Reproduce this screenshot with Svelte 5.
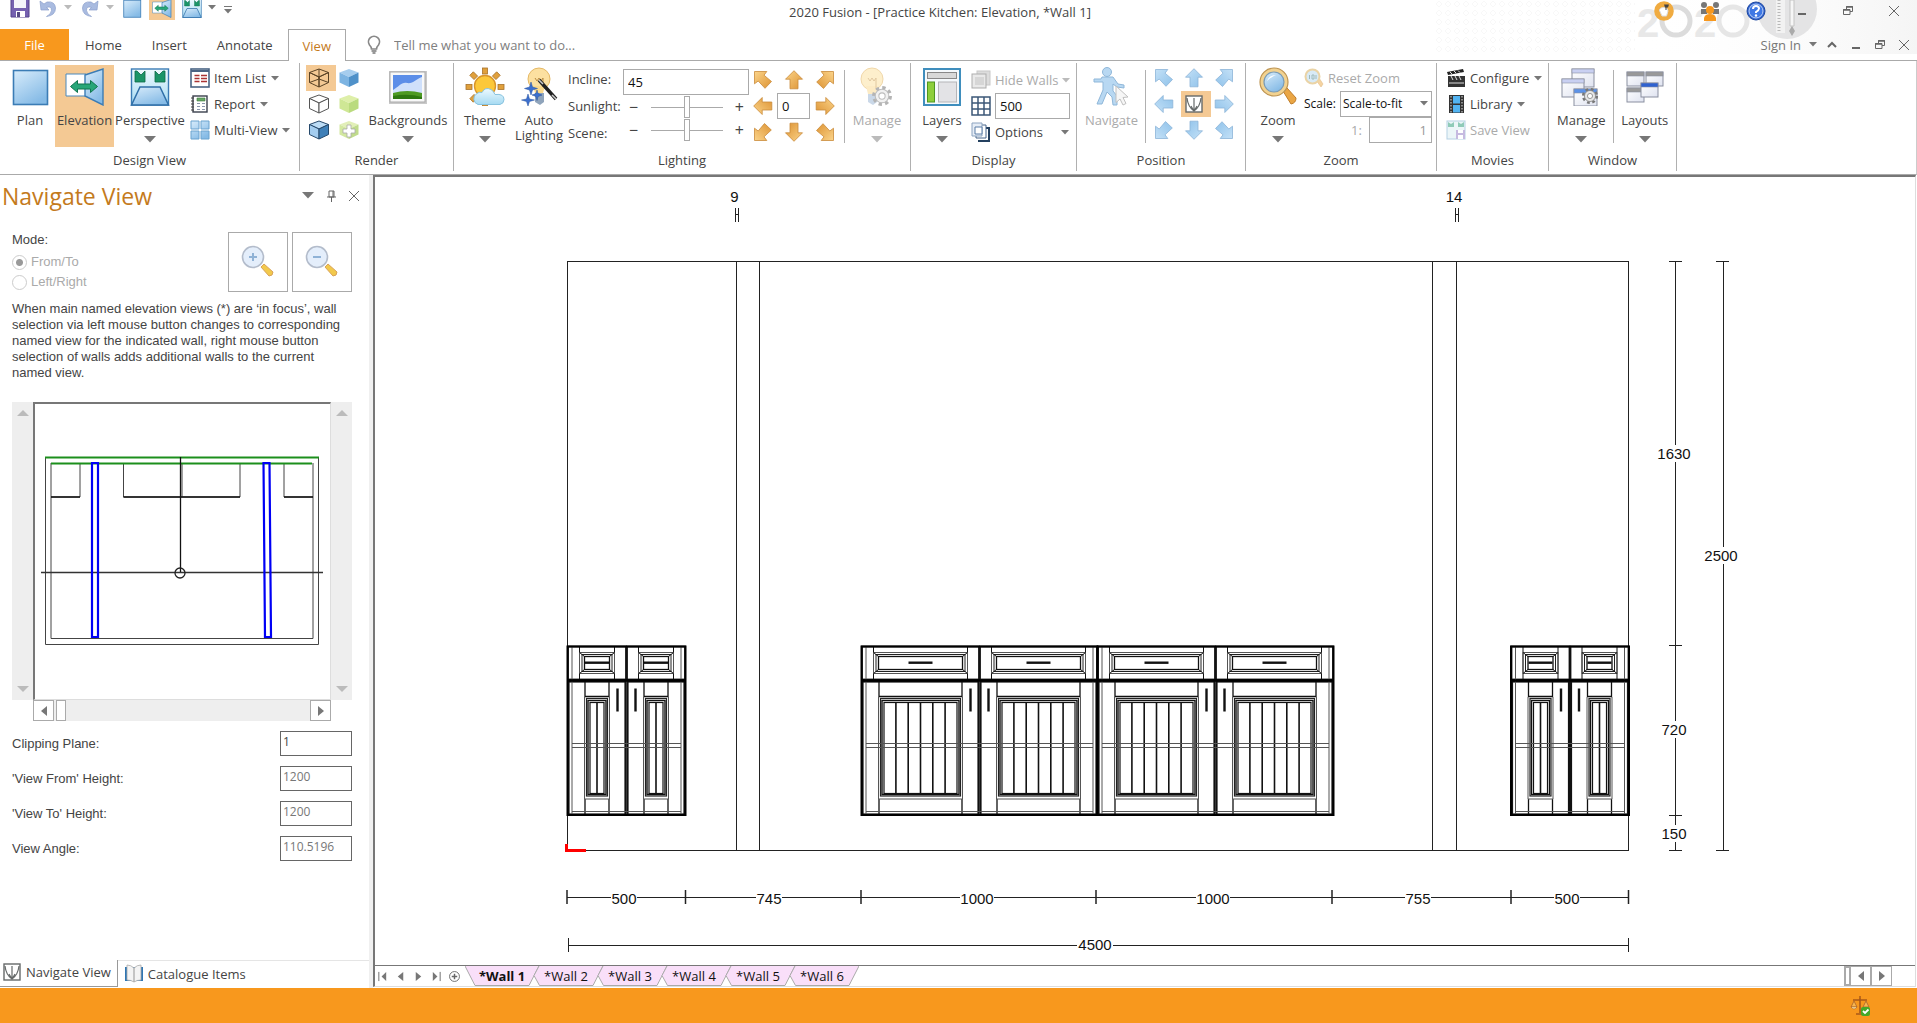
<script lang="ts">
  type Dim = { at: number; label: string };

  const ribbonTabs = ['Home', 'Insert', 'Annotate', 'View'];
  let activeTab = $state('View');

  const walls = ['*Wall 1', '*Wall 2', '*Wall 3', '*Wall 4', '*Wall 5', '*Wall 6'];
  let activeWall = $state('*Wall 1');

  let incline = $state('45');
  let sunlight = $state(50);
  let scene = $state(50);
  let rotation = $state('0');
  let gridSize = $state('500');
  let tellMe = $state('');

  // Direction pads, row by row. The centre cell is filled separately.
  const directions = [
    { name: 'Up left', diagonal: true, turn: 0 },
    { name: 'Up', diagonal: false, turn: 0 },
    { name: 'Up right', diagonal: true, turn: 90 },
    { name: 'Left', diagonal: false, turn: 270 },
    null,
    { name: 'Right', diagonal: false, turn: 90 },
    { name: 'Down left', diagonal: true, turn: 270 },
    { name: 'Down', diagonal: false, turn: 180 },
    { name: 'Down right', diagonal: true, turn: 180 }
  ];

  const fields = [
    { id: 'clip', label: 'Clipping Plane:', value: '1', disabled: false },
    { id: 'from', label: "'View From' Height:", value: '1200', disabled: true },
    { id: 'to', label: "'View To' Height:", value: '1200', disabled: true },
    { id: 'angle', label: 'View Angle:', value: '110.5196', disabled: true }
  ];

  // Base units on the wall: x of the unit, width of one door
  const units = [
    { x: 567.5, door: 59 },
    { x: 861.5, door: 118 },
    { x: 1097.5, door: 118 },
    { x: 1511, door: 59 }
  ];

  const bottomTicks = [567, 685.5, 861, 1096, 1332, 1511, 1628.5];
  const bottomDims: Dim[] = [
    { at: 624, label: '500' },
    { at: 769, label: '745' },
    { at: 977, label: '1000' },
    { at: 1213, label: '1000' },
    { at: 1418, label: '755' },
    { at: 1567, label: '500' }
  ];
  const sideTicks = [261, 645, 815, 850];
  const sideDims: Dim[] = [
    { at: 454, label: '1630' },
    { at: 730, label: '720' },
    { at: 834, label: '150' }
  ];

  function slats(width: number) {
    const count = width > 100 ? 5 : 1;
    return Array.from({ length: count }, (_, i) => width / 2 + (i - (count - 1) / 2) * 12.3);
  }
</script>

{#snippet caret()}
  <svg class="caret" viewBox="0 0 8 5" aria-hidden="true"><path d="M0 0h8L4 4.5z" /></svg>
{/snippet}

{#snippet bigCaret()}
  <svg class="big-caret" viewBox="0 0 12 7" aria-hidden="true"><path d="M0 0h12L6 6.5z" /></svg>
{/snippet}

{#snippet arrow(diagonal: boolean, turn: number, tone: string)}
  <svg class="arrow" viewBox="0 0 20 20" aria-hidden="true">
    <g transform="rotate({turn} 10 10)" fill="url(#{tone})" stroke={tone === 'gold' ? '#c98a3a' : '#8bb4d8'} stroke-width=".8">
      {#if diagonal}
        <path d="M1.5 1.5h12.3L11 5.2l7.5 6.3-6.500 6.800-6.800-7.300-3.700 2.800z" />
      {:else}
        <path d="M10 .7 18.5 9.2H14v9.600H6V9.200H1.500z" />
      {/if}
    </g>
  </svg>
{/snippet}

{#snippet gear(x: number, y: number, size: number)}
  <g transform="translate({x} {y}) scale({size})">
    <circle r="7.5" fill="none" stroke="#777" stroke-width="4" stroke-dasharray="3 2.89" />
    <circle r="6.5" fill="#e6e6e6" stroke="#888" />
    <circle r="3" fill="#fff" stroke="#888" />
  </g>
{/snippet}

{#snippet pane(x: number, y: number, w: number, h: number, head: string)}
  <rect {x} {y} width={w} height={h} fill="url(#paper)" stroke="#8a8fa0" />
  <rect {x} {y} width={w} height="4" fill={head} stroke="#8a8fa0" stroke-width=".6" />
{/snippet}

{#snippet pic(name: string)}
  <svg class="pic" viewBox="0 0 40 40" aria-hidden="true">
    {#if name === 'plan'}
      <rect x="3.5" y="4.5" width="34" height="34" fill="url(#sky)" stroke="#3b7cb5" stroke-width="1.6" />
    {:else if name === 'elevation'}
      <path d="M1 8h20v22H1z" fill="#fff" stroke="#4b89bd" />
      <path d="M20 9 38 3v36l-18-9z" fill="url(#sky)" stroke="#3b7cb5" stroke-width="1.4" />
      <path d="m5.500 20.500 7-6v3.500h13v-3.500l7 6-7 6V23h-13v3.500z" fill="#27a678" stroke="#10754f" />
    {:else if name === 'perspective'}
      <rect x="1.5" y="3" width="37" height="36" fill="url(#pale)" stroke="#3b7cb5" stroke-width="1.4" />
      <path d="M10 21h20l8.500 18h-37z" fill="url(#sky)" stroke="#2f6fa8" stroke-width="1.5" />
      <path d="M5 5v11h10V5l-4 4-4-4zM35 5v11H25V5l4 4 4-4z" fill="#1b9568" stroke="#0d6b48" stroke-width=".8" />
    {:else if name === 'backgrounds'}
      <rect x="1" y="5" width="38" height="33" fill="#c9c9c9" />
      <rect x="2" y="6" width="35" height="30" fill="#f8f8f8" stroke="#aaa" />
      <rect x="5" y="9" width="29" height="24" fill="#5c8ee8" />
      <path d="M5 24c6-3 8-8 14-7s9-4 15-6v18H5z" fill="#cfe0fb" />
      <path d="M5 27q14-4 29 0v6H5z" fill="#4d9a22" />
      <path d="M5 30q15-3 29 1v2H5z" fill="#2d7710" />
    {:else if name === 'theme'}
      <g fill="#e0a03c" stroke="#a8722a" stroke-width=".8">
        {#each [0, 45, 90, 135, 180, 225, 270, 315] as a}
          <rect x="17.5" y="2" width="5" height="6" transform="rotate({a} 20 21)" />
        {/each}
      </g>
      <circle cx="20" cy="20" r="10.5" fill="#fcc83a" stroke="#d9952a" stroke-width="1.4" />
      <path d="M13 38.500a6 6 0 0 1-1-11q2-2 5-1 3-6 9-3 3 2 4 5 9-1 9 5 0 4-4 5z" fill="url(#pale)" stroke="#88c3df" />
    {:else if name === 'auto'}
      <circle cx="20" cy="13" r="11" fill="#fce0a0" stroke="#e5b865" />
      <path d="M14 20h12l-2 7h-8z" fill="#fad98c" />
      <path d="m16 12 2 3 2-3 2 3 2-3v9" fill="none" stroke="#b88b42" />
      <path d="M16 27h9v9l-4 3-5-3z" fill="#8fa4bb" />
      <path d="m20 14 17 19" stroke="#222" stroke-width="3.5" />
      <path d="m20 14 4 4M33 29l4 4" stroke="#ccc" stroke-width="1.5" />
      <g fill="#3c70cf" stroke="#25509d" stroke-width=".5">
        <path d="m12 16 1.500 5 5 1.500-5 1.500-1.500 5-1.500-5-5-1.500 5-1.500zM18 24l1 3.500 4 1.500-4 1.500-1 4-1-4-4-1.500 4-1.500zM9 28l1.500 5 5 1-5 1.500L9 40l-1.500-4.500-5-1.500 5-1z" />
      </g>
    {:else if name === 'manage-light'}
      <g opacity=".55">
        <circle cx="15" cy="13" r="11" fill="#fde3a4" stroke="#e5b865" />
        <path d="M9 20h12l-2 8h-8z" fill="#fbdc96" />
        <path d="m11 12 2 3 2-3 2 3 2-3v10" fill="none" stroke="#c89d55" />
        <path d="M11 28h9v8l-4 3-5-3z" fill="#9fb9d6" />
        {@render gear(25, 30, 1.05)}
      </g>
    {:else if name === 'layers'}
      <rect x="2" y="3" width="36" height="36" fill="#f5f9fc" stroke="#3f8ebd" stroke-width="2" />
      <rect x="5.5" y="6.5" width="29" height="6" fill="#d8d8d8" stroke="#888" />
      <rect x="5.5" y="16" width="7" height="20" fill="#8dcf3c" stroke="#4f9620" />
      <rect x="16.5" y="16" width="18" height="20" fill="#e3e3e6" stroke="#b5b5b8" />
    {:else if name === 'navigate'}
      <g fill="#b8d8f2" stroke="#8fb7d9">
        <path d="M10 11h11l5 7 6 1v3l-7-1-4-3v7l4 5v9h-4l-1-8-5-5-5 12H5l6-14v-8H2v-3h7z" />
        <circle cx="15" cy="6" r="4.5" />
      </g>
      <path d="m24 20 12 11-5 .5 3 6-3 1.500-3-6-4 3.500z" fill="#f6f6f6" stroke="#c0c0c0" />
    {:else if name === 'zoom'}
      <path d="m25 25 4-3 9 10q0 5-5 6z" fill="#eaa645" stroke="#c07d29" />
      <circle cx="16" cy="16" r="14" fill="#f2d290" stroke="#bd9452" stroke-width="1.2" />
      <circle cx="16" cy="16" r="10" fill="url(#sky)" stroke="#7a9bb5" stroke-width="1.2" />
      <path d="M9 15q2-6 9-6-5 2-9 6" fill="#fff" />
    {:else if name === 'manage-win'}
      {@render pane(11, 3, 22, 18, '#c9d0f2')}
      {@render pane(1, 13, 22, 18, '#c9d0f2')}
      {@render pane(13, 23, 23, 17, '#5c92e8')}
      {@render gear(29, 30, 0.85)}
    {:else if name === 'layouts'}
      {@render pane(2, 6, 17, 14, '#999')}
      {@render pane(21, 6, 17, 14, '#999')}
      {@render pane(2, 22, 17, 14, '#999')}
      {@render pane(16, 17, 17, 14, '#2f62d0')}
    {/if}
  </svg>
{/snippet}

{#snippet glyph(name: string)}
  <svg class="glyph" viewBox="0 0 20 20" aria-hidden="true">
    {#if name === 'list'}
      <rect x="1" y="1" width="18" height="18" fill="#fff" stroke="#4a6484" stroke-width="1.6" />
      <path d="M1 2h18v2H1z" fill="#4a6484" />
      <path d="M4.500 7.500h5M4.500 10.500h5M4.500 13.500h5M11 7.500h6M11 10.500h6M11 13.500h6" stroke="#a33" stroke-width="1.3" />
    {:else if name === 'report'}
      <rect x="3" y="2" width="14" height="16" fill="#fff" stroke="#3a3f4c" stroke-width="1.4" />
      <path d="M1 4h3M1 7h3M1 10h3M1 13h3M1 16h3" stroke="#444" />
      <path d="M7 4h8v3H7z" fill="#67a865" stroke="#3d7a3e" stroke-width=".6" />
      <path d="M7 9.500h3M7 12.500h3M7 15.500h3M12 9.500h3M12 12.500h3M12 15.500h3" stroke="#8a96ad" />
    {:else if name === 'multi'}
      <path d="M1 1h8v8H1zM11 1h8v8h-8zM1 11h8v8H1zM11 11h8v8h-8z" fill="url(#sky)" stroke="#6ba3cf" />
    {:else if name.startsWith('cube')}
      {@const tone = {
        'cube-wire': ['none', 'none', 'none', '#5a4326'],
        'cube-hidden': ['#fff', '#fff', '#fff', '#555'],
        'cube-edge': ['#bcdcf5', '#a4cdef', '#3f80b8', '#26496b'],
        'cube-blue': ['#a6cdee', '#7db4e2', '#4f91c9', 'none'],
        'cube-green': ['#deefa9', '#cfe795', '#badb7e', 'none'],
        'cube-add': ['#e2efb8', '#d3e8a0', '#c0db8c', 'none']
      }[name] ?? []}
      <g stroke={tone[3]} stroke-linejoin="round">
        <path d="M10 1 19.500 4.500 10 9 .5 4.500z" fill={tone[0]} />
        <path d="M.5 4.500 10 9v10L.5 14.500z" fill={tone[1]} />
        <path d="M10 9l9.500-4.500v10L10 19z" fill={tone[2]} />
        {#if name === 'cube-wire'}<path d="M10 1v10M.5 14.500 10 11l9.500 3.500" fill="none" />{/if}
      </g>
      {#if name === 'cube-add'}
        <path d="M8 5h4v4h4v4h-4v4H8v-4H4V9h4z" fill="#fff" stroke="#aaa" stroke-width=".8" />
      {/if}
    {:else if name === 'walls'}
      <rect x="6" y="1" width="13" height="14" fill="#d4d4d4" stroke="#bbb" />
      <rect x="1" y="4" width="14" height="14" fill="#e4e4e4" stroke="#999" />
      <path d="M4 7h9v8H4z" fill="#ccc" />
    {:else if name === 'grid'}
      <path d="M1 1h18v18H1zM7 1v18M13 1v18M1 7h18M1 13h18" fill="#fff" stroke="#3d5878" stroke-width="1.5" />
    {:else if name === 'options'}
      <path d="M9 6h9v13H7" fill="#fff" stroke="#24405f" stroke-width="2" />
      <path d="M5 3h10v13H5z" fill="#fff" stroke="#47648a" />
      <path d="M1 1h10v13H1z" fill="#e6edf6" stroke="#8ca3bf" />
      <path d="M4 5h7v7H4z" fill="#fff" stroke="#5b7da6" />
    {:else if name === 'reset'}
      <path d="m12 12 3-2 4 6-2 3z" fill="#f3c98a" stroke="#dcae6b" stroke-width=".6" />
      <circle cx="8.5" cy="8.5" r="7" fill="#cfe5f5" stroke="#e5c98f" stroke-width="2" />
      <path d="M5.500 7v4M8 7v4h2V7H8M12 7v4" fill="none" stroke="#8aa" />
    {:else if name === 'clapper'}
      <path d="M2 8h17v11H2z" fill="#333" />
      <path d="m1 4 16-3 1 3L2 7z" fill="#222" />
      <path d="m4 4 2 2M8 3l2 2M12 2.500l2 2M5 8l2 4M9 8l2 4M13 8l2 4M3 15h15" stroke="#ddd" />
    {:else if name === 'film'}
      <path d="M3 1h15v18H3z" fill="#333" />
      <path d="M7 2h7v7.500H7zM7 11h7v7.500H7z" fill="#52b4f2" />
      <path d="M5 2v17M16 2v17" stroke="#aaa" stroke-width="1.5" stroke-dasharray="1.5 1.5" />
    {:else if name === 'save-view'}
      <g opacity=".7">
        <rect x="1" y="1" width="18" height="18" fill="#dff0f5" stroke="#7eb1cf" />
        <path d="M2 2v5h6V2L5 4zM18 2v5h-6V2l3 2z" fill="#3aa583" />
        <path d="M10 10h9v9h-9z" fill="#9b85c9" />
        <path d="M12 10h5v3h-5zM12 15h5v4h-5z" fill="#fff" />
      </g>
    {:else if name === 'position'}
      <rect x="2" y="2" width="16" height="16" fill="#fff" stroke="#666a6a" stroke-width="1.4" />
      <path d="M10 4v13M3 4q1 9 7 13 6-4 7-13M7 12l3 5 3-5" fill="none" stroke="#666a6a" stroke-width="1.2" />
    {:else if name === 'book'}
      <path d="M1 3v14h18V3" fill="#2f76b3" />
      <path d="M3 1q4 0 7 3v14q-3-2-7-2zM17 1q-4 0-7 3v14q3-2 7-2z" fill="#f4f4f4" stroke="#aaa" stroke-width=".8" />
    {:else if name === 'save'}
      <path d="M1 1h18v18H1z" fill="#7561b0" stroke="#57458e" />
      <path d="M4 1h12v9H4z" fill="#f4f4fa" />
      <path d="M6 13h9v6H6z" fill="#fff" />
      <path d="M7 14h3v5H7z" fill="#574b85" />
    {:else if name === 'undo' || name === 'redo'}
      <g transform={name === 'redo' ? 'translate(20 0) scale(-1 1)' : ''}>
        <path d="m2 3 1 9h8L8.500 9.500q5-2 5 3-.5 4-5 6 9-1 9-8.500Q17 3 9 4L6 6z" fill="#a9bbe0" stroke="#8b9fcc" stroke-width=".7" />
      </g>
    {:else if name === 'bulb'}
      <path d="M7.500 14q0-2-2-4a5.500 5.500 0 1 1 9 0q-2 2-2 4z" fill="#fff" stroke="#888" stroke-width="1.7" />
      <path d="M7.500 16h5M8.500 18h3" stroke="#777" stroke-width="1.6" />
    {:else if name === 'help'}
      <circle cx="10" cy="10" r="9" fill="#2f62ce" stroke="#1d479f" />
      <circle cx="10" cy="10" r="7" fill="#3f78e4" stroke="#bcd0f5" />
      <path d="M7 8q0-3 3-3t3 2.500Q13 9 10 11v1" fill="none" stroke="#fff" stroke-width="2" />
      <circle cx="10" cy="14.5" r="1.2" fill="#fff" />
    {:else if name === 'people'}
      <g fill="#777">
        <circle cx="4" cy="4" r="3" /><path d="M1 8h6v5H1z" />
        <circle cx="16" cy="4" r="3" /><path d="M13 8h6v5h-6z" />
      </g>
      <circle cx="10" cy="9" r="4" fill="#f8981d" />
      <path d="M4 20q-1-7 6-7t6 7z" fill="#f8981d" />
    {:else if name === 'idea'}
      <circle cx="10" cy="10" r="9.8" fill="#f0ab40" />
      <path d="M5.500 9.500q0-3 4.500-3 4 0 4 3.500l-1.500 5H8z" fill="#fff" stroke="#ddd" />
      <path d="M10 3.500h5l-1 3h-3z" fill="#444" />
      <path d="M12 6v3" stroke="#444" />
    {:else if name === 'scales'}
      <path d="M10 2v15M3 4h14M6 18h9M9 1h2" stroke="#a85818" stroke-width="1.6" />
      <path d="M4 5 1 11h6zM16 5l-3 6h6z" fill="#f8b650" stroke="#a8622a" stroke-width=".8" />
      <path d="M1 11h6q-3 4-6 0" fill="#fff0b5" stroke="#a8622a" stroke-width=".6" />
      <rect x="11" y="11" width="9" height="9" rx="2" fill="#45a827" />
      <path d="m13 15 2 2 3.500-3.500" fill="none" stroke="#fff" stroke-width="1.8" />
    {/if}
  </svg>
{/snippet}

{#snippet sign(name: string)}
  <svg class="sign" viewBox="0 0 12 12" aria-hidden="true">
    {#if name === 'min'}<path d="M2 9h8" stroke-width="2" />
    {:else if name === 'restore'}<path d="M4.500 4V1.500h6v5H8M1.500 4.500H8v5H1.500z" /><path d="M4 2h7M1 5h7" stroke-width="1.5" />
    {:else if name === 'close'}<path d="m1 1 10 10M11 1 1 11" />
    {:else if name === 'up'}<path d="m2 8 4-4 4 4" stroke-width="2" />
    {:else if name === 'pin'}<path d="M4 1h5v6H4zM2 7h9M6.500 7v5M8 1v6" />
    {:else if name === 'left'}<path class="solid" d="M9 1v10L3 6z" />
    {:else if name === 'right'}<path class="solid" d="M3 1v10l6-5z" />
    {:else if name === 'first'}<path class="solid" d="M10 1v10L5 6z" /><path d="M2 1v10" />
    {:else if name === 'last'}<path class="solid" d="M2 1v10l5-5z" /><path d="M10 1v10" />
    {:else if name === 'scroll-up'}<path class="solid" d="M0 9h12L6 3z" />
    {:else if name === 'scroll-down'}<path class="solid" d="M0 3h12L6 9z" />
    {:else if name === 'add'}<circle cx="6" cy="6" r="5.4" /><path d="M6 3v6M3 6h6" stroke-width="1.6" />
    {/if}
  </svg>
{/snippet}

{#snippet big(name: string, label: string, menu = false, disabled = false, on = false)}
  <button class="big" class:on {disabled}>
    {@render pic(name)}
    <span>{label}</span>
    {#if menu}{@render bigCaret()}{/if}
  </button>
{/snippet}

{#snippet small(name: string, label: string, menu = true, disabled = false)}
  <button class="small" {disabled}>
    {@render glyph(name)}
    <span>{label}</span>
    {#if menu}{@render caret()}{/if}
  </button>
{/snippet}

{#snippet lens(plus: boolean)}
  <svg class="lens" viewBox="0 0 34 34" aria-hidden="true">
    <path d="m20 22 3-3 9 8q0 4-4 4z" fill="#f2c94c" stroke="#d9a35a" />
    <circle cx="12" cy="12" r="10.5" fill="#e4eefb" stroke="#b3bccb" stroke-width="1.6" />
    <path d={plus ? 'M8 12h8M12 8v8' : 'M8 12h8'} stroke="#8fb2d6" stroke-width="2" />
  </svg>
{/snippet}

<!-- Shared gradients -->
<svg class="defs" aria-hidden="true">
  <defs>
    <linearGradient id="sky" x1="0" y1="0" x2="0.6" y2="1">
      <stop offset="0" stop-color="#d8ecfb" /><stop offset="1" stop-color="#86bbe6" />
    </linearGradient>
    <linearGradient id="pale" x1="0" y1="0" x2="0" y2="1">
      <stop offset="0" stop-color="#eefaff" /><stop offset="1" stop-color="#a5daf2" />
    </linearGradient>
    <linearGradient id="gold" x1="0" y1="0" x2="1" y2="1">
      <stop offset="0" stop-color="#fbd48a" /><stop offset="1" stop-color="#dd9333" />
    </linearGradient>
    <linearGradient id="ice" x1="0" y1="0" x2="1" y2="1">
      <stop offset="0" stop-color="#c4e1f7" /><stop offset="1" stop-color="#8fc2ea" />
    </linearGradient>
    <linearGradient id="paper" x1="0" y1="0" x2="1" y2="1">
      <stop offset="0" stop-color="#fff" /><stop offset="1" stop-color="#dfe3f0" />
    </linearGradient>
  </defs>
</svg>

<div class="app">
  <header>
    <svg class="banner" viewBox="0 0 482 54" aria-hidden="true">
      <defs>
        <pattern id="dots" width="18" height="18" patternUnits="userSpaceOnUse">
          <path d="m4 1 3 3-3 3-3-3zM13 10l3 3-3 3-3-3zM13 1l3 3-3 3-3-3zM4 10l3 3-3 3-3-3z" fill="none" stroke="#f8f8f8" />
        </pattern>
        <linearGradient id="fade"><stop offset="0" stop-color="#fff" stop-opacity="0" /><stop offset="1" stop-color="#f5f5f5" /></linearGradient>
      </defs>
      <rect x="200" width="282" height="54" fill="url(#fade)" />
      <rect width="200" height="54" fill="url(#dots)" />
      <circle cx="352" cy="9" r="30" fill="#e4e4e5" />
      <path d="M341 0h9v33h-9z" fill="#f2f2f2" />
      <path d="M344 0v33" stroke="#b8b8b8" stroke-width="3" stroke-dasharray="1 2" />
      <path d="M355 0h4v26h-4z" fill="#f6f6f6" stroke="#c4c4c4" />
      <path d="m357 26 3 5-3 5-3-5z" fill="#aaa" />
      <g class="logo">
        <text x="202" y="37">2</text>
        <text x="259" y="37">2</text>
        <circle cx="241" cy="21" r="14" stroke="#dcdcdc" />
        <circle cx="298" cy="21" r="14" stroke="#e6e6e6" />
      </g>
    </svg>

    <div class="title-row">
      <div class="quick">
        <button aria-label="Save">{@render glyph('save')}</button>
        <button class="with-menu" aria-label="Undo">{@render glyph('undo')}{@render caret()}</button>
        <button class="with-menu" aria-label="Redo">{@render glyph('redo')}{@render caret()}</button>
        <button class="mini" aria-label="Plan">{@render pic('plan')}</button>
        <button class="mini on" aria-label="Elevation">{@render pic('elevation')}</button>
        <button class="mini with-menu dark" aria-label="Perspective">{@render pic('perspective')}{@render caret()}</button>
        <button class="custom" aria-label="Customise toolbar">{@render caret()}</button>
      </div>
      <div class="title">2020 Fusion - [Practice Kitchen: Elevation, *Wall 1]</div>
      <div class="window-tools">
        <button aria-label="Ideas">{@render glyph('idea')}</button>
        <button aria-label="Community">{@render glyph('people')}</button>
        <button aria-label="Help">{@render glyph('help')}</button>
        <button aria-label="Minimise">{@render sign('min')}</button>
        <button aria-label="Restore">{@render sign('restore')}</button>
        <button aria-label="Close">{@render sign('close')}</button>
      </div>
    </div>

    <nav class="tab-row">
      <button class="file">File</button>
      {#each ribbonTabs as tab}
        <button class="tab" class:active={activeTab === tab} onclick={() => (activeTab = tab)}>{tab}</button>
      {/each}
      <label class="tell">
        {@render glyph('bulb')}
        <input type="text" placeholder="Tell me what you want to do..." aria-label="Tell me what you want to do" bind:value={tellMe} />
      </label>
      <div class="doc-tools">
        <button class="sign-in">Sign In {@render caret()}</button>
        <button aria-label="Collapse ribbon">{@render sign('up')}</button>
        <button aria-label="Minimise view">{@render sign('min')}</button>
        <button aria-label="Restore view">{@render sign('restore')}</button>
        <button aria-label="Close view">{@render sign('close')}</button>
      </div>
    </nav>
  </header>

  <div class="ribbon">
    <section>
      <div class="tools design">
        {@render big('plan', 'Plan')}
        {@render big('elevation', 'Elevation', false, false, true)}
        {@render big('perspective', 'Perspective', true)}
        <div class="stack">
          {@render small('list', 'Item List')}
          {@render small('report', 'Report')}
          {@render small('multi', 'Multi-View')}
        </div>
      </div>
      <h2>Design View</h2>
    </section>

    <section>
      <div class="tools render">
        <div class="cubes">
          {#each ['wire', 'blue', 'hidden', 'green', 'edge', 'add'] as kind}
            <button class:on={kind === 'wire'} aria-label="Render {kind}">{@render glyph('cube-' + kind)}</button>
          {/each}
        </div>
        {@render big('backgrounds', 'Backgrounds', true)}
      </div>
      <h2>Render</h2>
    </section>

    <section>
      <div class="tools lighting">
        {@render big('theme', 'Theme', true)}
        {@render big('auto', 'Auto Lighting')}
        <div class="light-labels">
          <label for="incline">Incline:</label>
          <label for="sunlight">Sunlight:</label>
          <label for="scene">Scene:</label>
        </div>
        <div class="light-form">
          <input id="incline" class="box" type="text" bind:value={incline} />
          <div class="slider">
            <button aria-label="Less sunlight">−</button>
            <input id="sunlight" type="range" bind:value={sunlight} />
            <button aria-label="More sunlight">+</button>
          </div>
          <div class="slider">
            <button aria-label="Less scene light">−</button>
            <input id="scene" type="range" bind:value={scene} />
            <button aria-label="More scene light">+</button>
          </div>
        </div>
        <div class="pad">
          {#each directions as dir}
            {#if dir}
              <button aria-label="Sun {dir.name}">{@render arrow(dir.diagonal, dir.turn, 'gold')}</button>
            {:else}
              <input class="box" type="text" aria-label="Sun rotation" bind:value={rotation} />
            {/if}
          {/each}
        </div>
        <div class="rule"></div>
        {@render big('manage-light', 'Manage', true, true)}
      </div>
      <h2>Lighting</h2>
    </section>

    <section>
      <div class="tools display">
        {@render big('layers', 'Layers', true)}
        <div class="stack">
          {@render small('walls', 'Hide Walls', true, true)}
          <label class="grid-size">
            {@render glyph('grid')}
            <input class="box" type="text" aria-label="Grid size" bind:value={gridSize} />
          </label>
          {@render small('options', 'Options')}
        </div>
      </div>
      <h2>Display</h2>
    </section>

    <section>
      <div class="tools position">
        {@render big('navigate', 'Navigate', false, true)}
        <div class="rule"></div>
        <div class="pad even">
          {#each directions as dir}
            {#if dir}
              <button aria-label="Move {dir.name}">{@render arrow(dir.diagonal, dir.turn, 'ice')}</button>
            {:else}
              <button class="on" aria-label="Centre position">{@render glyph('position')}</button>
            {/if}
          {/each}
        </div>
      </div>
      <h2>Position</h2>
    </section>

    <section>
      <div class="tools zoom">
        {@render big('zoom', 'Zoom', true)}
        <div class="stack">
          {@render small('reset', 'Reset Zoom', false, true)}
          <div class="scale">
            <label for="scale">Scale:</label>
            <div class="select">
              <select id="scale"><option>Scale-to-fit</option></select>
              {@render caret()}
            </div>
          </div>
          <div class="scale ratio">
            <label for="ratio">1:</label>
            <input id="ratio" class="box" type="text" value="1" disabled />
          </div>
        </div>
      </div>
      <h2>Zoom</h2>
    </section>

    <section>
      <div class="tools movies">
        <div class="stack">
          {@render small('clapper', 'Configure')}
          {@render small('film', 'Library')}
          {@render small('save-view', 'Save View', false, true)}
        </div>
      </div>
      <h2>Movies</h2>
    </section>

    <section>
      <div class="tools window">
        {@render big('manage-win', 'Manage', true)}
        <div class="rule"></div>
        {@render big('layouts', 'Layouts', true)}
      </div>
      <h2>Window</h2>
    </section>
  </div>

  <main>
    <aside>
      <div class="side-head">
        <h1>Navigate View</h1>
        <button aria-label="Panel menu">{@render bigCaret()}</button>
        <button aria-label="Pin panel">{@render sign('pin')}</button>
        <button aria-label="Close panel">{@render sign('close')}</button>
      </div>

      <div class="side-body">
        <div class="mode">
          <fieldset>
            <legend>Mode:</legend>
            <label><input type="radio" name="mode" checked disabled /> From/To</label>
            <label><input type="radio" name="mode" disabled /> Left/Right</label>
          </fieldset>
          <button class="zoom-btn" aria-label="Zoom in">{@render lens(true)}</button>
          <button class="zoom-btn" aria-label="Zoom out">{@render lens(false)}</button>
        </div>

        <p>
          When main named elevation views (*) are ‘in focus’, wall selection via left mouse button changes to
          corresponding named view for the indicated wall, right mouse button selection of walls adds additional walls
          to the current named view.
        </p>

        <div class="viewer">
          <div class="v-scroll">{@render sign('scroll-up')}{@render sign('scroll-down')}</div>
          <!-- Plan of the room with the current viewpoint -->
          <svg class="plan" viewBox="35 404 295 295" role="img" aria-label="Room plan">
            <g fill="none" stroke="#444">
              <path d="M45.500 457v187.500H318.500V457M51 463v175.500H313V463" />
              <path d="M51 497h29v-34M123.500 463v34H240v-34M182 463v34M313 497h-29v-34" />
            </g>
            <path d="M51 497h29M123.500 497H240M284 497h29" stroke="#111" stroke-width="1.6" />
            <path d="M45 457.500h274M51 463.500h261" stroke="#1c8f1c" stroke-width="2" />
            <path d="M41 572.500h282" stroke="#333" stroke-width="1.3" />
            <path d="M180.500 457v115" stroke="#111" stroke-width="1.3" />
            <circle cx="180" cy="573" r="5" fill="none" stroke="#222" stroke-width="1.3" />
            <path d="M92 463h6v174h-6zM263.500 463h6l1.500 174h-6z" fill="none" stroke="#0000f5" stroke-width="2.2" />
          </svg>
          <div class="v-scroll">{@render sign('scroll-up')}{@render sign('scroll-down')}</div>
          <div class="h-scroll">
            <button aria-label="Scroll left">{@render sign('left')}</button>
            <span></span>
            <button aria-label="Scroll right">{@render sign('right')}</button>
          </div>
        </div>

        {#each fields as field}
          <div class="field">
            <label for={field.id}>{field.label}</label>
            <input id={field.id} type="text" value={field.value} disabled={field.disabled} />
          </div>
        {/each}
      </div>

      <div class="side-tabs">
        <button class="current">{@render glyph('position')}Navigate View</button>
        <button>{@render glyph('book')}Catalogue Items</button>
      </div>
    </aside>

    <div class="workspace">
      <svg class="drawing" viewBox="375 177 1540 788" role="img" aria-label="Elevation of wall 1">
        <g fill="none" stroke="#222">
          <rect x="567.5" y="261.5" width="1061" height="589" />
          <path d="M736.5 261V851M759.5 261V851M1432.5 261V851M1456.5 261V851" />
        </g>

        <!-- Base units -->
        {#each units as unit}
          {@const end = unit.x + unit.door * 2}
          {#each [0, 1] as side}
            {@const w = unit.door}
            <g transform="translate({unit.x + side * w} 0)" fill="none" stroke="#111">
              <rect x="0.5" y="646.5" width={w - 1} height="33" stroke-width="1.8" />
              <path d="M12 647v32M{w - 12} 647v32" />
              <rect x="12" y="652.5" width={w - 24} height="21" stroke="#555" />
              <rect x="14.5" y="654.5" width={w - 29} height="17" stroke="#222" />
              <rect x="17" y="656.5" width={w - 34} height="13" stroke-width="1.3" />
              <path d="M12 652.5l5 4M{w - 12} 652.5l-5 4M12 673.5l5-4M{w - 12} 673.5l-5-4" />
              <path d="M{w / 2 - 12} 662.7h24" stroke-width="2.4" />

              <rect x="1" y="681.5" width={w - 2} height="133" stroke-width="2.2" />
              <path d="M17.5 682v15M{w - 17.5} 682v15M17.5 799v15M{w - 17.5} 799v15M17 696.5H{w - 17}" stroke-width="1.3" />
              <path d="M17 697v102H{w - 17}V697" stroke="#555" />
              <rect x="19" y="698.5" width={w - 38} height="97.5" stroke="#222" stroke-width="1.2" />
              <rect x="20.5" y="700.5" width={w - 41} height="94" stroke-width="1.4" />
              <rect x="22.5" y="702.5" width={w - 45} height="91" stroke-width="1.2" />
              {#each slats(w) as x}
                <path d="M{x} 702V793" stroke-width="1.6" />
              {/each}
              <path d="M{side ? 9 : w - 9} 688.5v23" stroke-width="2.4" />
            </g>
          {/each}
          <path
            d="M{unit.x + 4.5} 647v168M{end - 4.5} 647v168M{unit.x + 4.5} 743.5H{end - 4.5}M{unit.x + 4.5} 747.5H{end - 4.5}M{unit.x + 4.5} 811.5H{end - 4.5}"
            stroke="#555"
          />
          <rect x={unit.x} y="646.5" width={unit.door * 2} height="168.5" fill="none" stroke="#000" stroke-width="2" />
          <path d="M{unit.x} 680.5H{end}" stroke="#000" stroke-width="2.4" />
        {/each}

        <path d="M566.5 844v6.5H586" fill="none" stroke="#f00" stroke-width="3" />

        <!-- Dimensions -->
        <g stroke="#222" fill="none">
          <path d="M735.5 208v14M738.5 208v14M735 214.5h4M1455.5 208v14M1458.5 208v14M1455 214.5h4" />
          <path d="M567 897.5H1629M568 945.5H1628M568.5 938v14M1628.5 938v14" />
          <path d="M1675.5 261V850M1723.5 261V850M1716 261.5h13M1716 850.5h13" />
          {#each bottomTicks as x}<path d="M{x} 890v14" stroke-width="1.5" />{/each}
          {#each sideTicks as y}<path d="M1669 {y + 0.5}h13" />{/each}
        </g>
        <g class="dims">
          <text x="734.5" y="202">9</text>
          <text x="1454" y="202">14</text>
          {#each bottomDims as dim}
            <rect x={dim.at - (dim.label.length * 4 + 1)} y="889" width={dim.label.length * 8 + 2} height="16" />
            <text x={dim.at} y="904">{dim.label}</text>
          {/each}
          <rect x="1077" y="937" width="36" height="16" />
          <text x="1095" y="950">4500</text>
          {#each sideDims as dim}
            <rect x="1665" y={dim.at - 9} width="20" height="17" />
            <text x="1674" y={dim.at + 5}>{dim.label}</text>
          {/each}
          <rect x="1712" y="547" width="20" height="17" />
          <text x="1721" y="561">2500</text>
        </g>
      </svg>

      <div class="sheet-bar">
        <div class="sheet-nav">
          <button aria-label="First sheet">{@render sign('first')}</button>
          <button aria-label="Previous sheet">{@render sign('left')}</button>
          <button aria-label="Next sheet">{@render sign('right')}</button>
          <button aria-label="Last sheet">{@render sign('last')}</button>
          <button aria-label="Add sheet">{@render sign('add')}</button>
        </div>
        {#each walls as wall, i}
          <button class="sheet" class:active={activeWall === wall} onclick={() => (activeWall = wall)}>
            <svg viewBox="0 0 74 20" aria-hidden="true">
              <path d={i === 0 ? 'M0 0 10 19.500H64L74 0' : 'M10 0 5 9.500 10.500 19.500H64L74 0'} />
            </svg>
            <span>{wall}</span>
          </button>
        {/each}
        <div class="sheet-scroll">
          <span></span>
          <button aria-label="Scroll sheets left">{@render sign('left')}</button>
          <button aria-label="Scroll sheets right">{@render sign('right')}</button>
        </div>
      </div>
    </div>
  </main>

  <footer>{@render glyph('scales')}</footer>
</div>

<style>
  :global(body) {
    margin: 0;
    background: #fff;
  }

  .app {
    display: flex;
    flex-direction: column;
    min-height: 100vh;
    font: 13px/16px 'Open Sans', 'Noto Sans', sans-serif;
    color: #444;
  }

  .app * {
    box-sizing: border-box;
  }

  button,
  input,
  select {
    margin: 0;
    padding: 0;
    border: 0;
    border-radius: 0;
    outline: 0;
    background: none;
    font: inherit;
    color: inherit;
  }

  button {
    display: flex;
    align-items: center;
    white-space: nowrap;
  }

  svg {
    display: block;
    flex: none;
  }

  .defs {
    position: absolute;
    width: 0;
    height: 0;
  }

  .on {
    background: #f4c994;
  }

  .caret {
    width: 8px;
    height: 5px;
    fill: #777;
  }

  .big-caret {
    width: 12px;
    height: 7px;
    fill: #777;
  }

  .pic {
    width: 40px;
    height: 40px;
  }

  .glyph,
  .arrow {
    width: 20px;
    height: 20px;
  }

  .sign {
    width: 12px;
    height: 12px;
    fill: none;
    stroke: #666;
  }

  .sign .solid {
    fill: #777;
    stroke: none;
  }

  .box {
    height: 26px;
    padding: 0 4px;
    border: 1px solid #aaa;
    background: #fff;
    color: #111;
  }

  /* Title bar */
  header {
    position: relative;
    border-bottom: 1px solid #aaa;
  }

  .banner {
    position: absolute;
    top: 0;
    right: 0;
    width: 482px;
    height: 54px;
  }

  .logo {
    font: 700 40px 'Liberation Sans', Arial, sans-serif;
    fill: #e8e8e8;
  }

  .logo circle {
    fill: none;
    stroke-width: 5;
  }

  .title-row {
    position: relative;
    display: grid;
    grid-template-columns: 1fr auto 1fr;
    height: 29px;
    padding-right: 17px;
  }

  .title {
    padding: 4px 20px 0 0;
  }

  .quick {
    display: flex;
    align-items: flex-start;
    height: 20px;
    padding-left: 10px;
    gap: 8px;
    overflow: hidden;
  }

  .quick button {
    height: 20px;
    align-items: center;
  }

  .quick .glyph {
    margin-top: -4px;
  }

  .with-menu {
    gap: 6px;
  }

  .quick .with-menu .caret {
    margin-top: -6px;
    fill: #bbb;
  }

  .quick .dark .caret {
    fill: #777;
  }

  .quick .mini .pic {
    width: 20px;
    height: 20px;
    margin-top: -4px;
  }

  .quick .mini.on {
    margin: 0 -1px;
    padding: 0 3px;
  }

  .custom .caret {
    height: 8px;
    padding-top: 2px;
    border-top: 1px solid #777;
  }

  .window-tools {
    display: flex;
    justify-content: flex-end;
    align-items: center;
    gap: 26px;
    height: 22px;
  }

  .window-tools button:nth-child(n + 4) {
    margin-left: 4px;
  }

  .window-tools button:nth-child(n + 5) {
    margin-left: 8px;
  }

  .tab-row {
    position: relative;
    display: flex;
    align-items: flex-end;
    height: 31px;
  }

  .tab-row button {
    justify-content: center;
  }

  .file {
    width: 69px;
    height: 31px;
    background: #f8981d;
    color: #fff;
  }

  .tab {
    height: 31px;
    padding: 0 14px;
    border: 1px solid transparent;
    border-bottom: 0;
  }

  .file + .tab {
    margin-left: 1px;
  }

  .tab.active {
    height: 32px;
    margin-bottom: -1px;
    border-color: #aaa;
    background: #fff;
    color: #c47a1c;
  }

  .tell {
    display: flex;
    align-items: center;
    flex: 1;
    height: 31px;
    padding-left: 18px;
    gap: 10px;
  }

  .tell input {
    flex: 1;
  }

  .tell input::placeholder {
    color: #808080;
    opacity: 1;
  }

  .doc-tools {
    display: flex;
    align-items: center;
    height: 31px;
    padding-right: 7px;
    gap: 12px;
  }

  .sign-in {
    gap: 8px;
    margin-right: -3px;
    color: #777;
  }

  /* Ribbon */
  .ribbon {
    display: grid;
    grid-template-columns: 300px 154px 457px 166px 169px 191px 112px 128px;
    height: 114px;
    padding-top: 2px;
    border-bottom: 1px solid #aaa;
    border-right: 1px solid #ccc;
  }

  section {
    display: flex;
    flex-direction: column;
    height: 108px;
    border-right: 1px solid #b0b0b0;
  }

  h2 {
    margin: 5px 0 0;
    font: inherit;
    text-align: center;
  }

  .tools {
    display: flex;
    height: 84px;
    padding-top: 2px;
  }

  .big {
    flex-direction: column;
    width: 64px;
    height: 82px;
    padding-top: 1px;
  }

  .big span {
    margin: 7px 0 8px;
    line-height: 15px;
    text-align: center;
    white-space: normal;
  }

  .small {
    height: 26px;
    gap: 4px;
  }

  .small .caret {
    margin-left: 1px;
  }

  button:disabled {
    color: #aaa;
  }

  button:disabled .caret,
  button:disabled .big-caret {
    fill: #bbb;
  }

  button:disabled .glyph {
    opacity: 0.8;
  }

  .stack {
    display: flex;
    flex-direction: column;
    align-items: flex-start;
  }

  .rule {
    width: 1px;
    height: 73px;
    margin-top: 5px;
    background: #b0b0b0;
  }

  .design {
    padding-left: 5px;
  }

  .design .big:nth-child(1) {
    width: 50px;
  }

  .design .big:nth-child(2) {
    width: 59px;
  }

  .design .big:nth-child(3) {
    width: 72px;
  }

  .design .stack {
    margin-left: 4px;
  }

  .render {
    padding-left: 6px;
  }

  .cubes {
    display: grid;
    grid-template-columns: 30px 30px;
    grid-auto-rows: 26px;
    align-content: start;
  }

  .cubes button,
  .even button {
    padding-left: 3px;
  }

  .render .big {
    width: 84px;
  }

  .lighting .big:nth-child(1) {
    width: 62px;
  }

  .lighting .big:nth-child(2) {
    width: 46px;
  }

  .light-labels {
    display: grid;
    grid-auto-rows: 27px;
    align-content: start;
    align-items: center;
    width: 55px;
    margin-left: 6px;
  }

  .light-form {
    display: flex;
    flex-direction: column;
    width: 126px;
    margin-top: 4px;
    gap: 1px;
  }

  .slider {
    display: flex;
    align-items: center;
    justify-content: space-between;
    height: 22px;
    padding: 0 5px 0 6px;
  }

  .slider button {
    font-size: 16px;
  }

  .slider input {
    width: 72px;
    height: 22px;
    appearance: none;
    background: linear-gradient(#aaa, #aaa) center / 100% 1px no-repeat;
  }

  .slider input::-webkit-slider-thumb {
    width: 6px;
    height: 22px;
    appearance: none;
    border: 1px solid #aaa;
    background: #fff;
  }

  .pad {
    display: grid;
    grid-template-columns: 28px 33px 30px;
    grid-auto-rows: 26px;
    align-content: start;
    margin-top: 2px;
  }

  .pad:not(.even) button {
    justify-content: center;
  }

  .pad.even {
    grid-template-columns: 30px 30px 30px;
    margin: 0 0 0 5px;
  }

  .lighting .pad + .rule {
    margin-left: 4px;
  }

  .display .big {
    width: 62px;
  }

  .display .stack {
    width: 98px;
    margin: 2px 0 0 -2px;
  }

  .display .small {
    width: 98px;
  }

  .display .small .caret {
    margin-left: auto;
  }

  .grid-size {
    display: flex;
    align-items: center;
    gap: 4px;
  }

  .grid-size .box {
    width: 75px;
  }

  .position .big {
    width: 67px;
  }

  .position,
  .window {
    padding-left: 1px;
  }

  .zoom .stack {
    margin-left: -6px;
    color: #111;
  }

  .scale {
    display: flex;
    align-items: center;
    gap: 2px;
  }

  .scale label {
    width: 34px;
    font-size: 12px;
  }

  .select {
    position: relative;
  }

  select {
    width: 92px;
    height: 26px;
    padding: 0 0 0 2px;
    border: 1px solid #aaa;
    background: #fff;
    font-size: 12px;
    appearance: none;
  }

  .select .caret {
    position: absolute;
    top: 10px;
    right: 4px;
  }

  .ratio {
    align-self: flex-end;
    justify-content: flex-end;
    color: #aaa;
  }

  .ratio label {
    width: 16px;
    font-size: 13px;
  }

  .ratio .box {
    width: 63px;
    text-align: right;
    color: #999;
  }

  .movies {
    padding-left: 9px;
  }

  /* Navigate View panel */
  main {
    display: flex;
    flex: 1;
  }

  aside {
    display: flex;
    flex-direction: column;
    flex: none;
    width: 373px;
    border-right: 4px solid #f0f0f0;
    font: 13px/16px 'Liberation Sans', Arial, sans-serif;
  }

  .side-head {
    display: flex;
    align-items: center;
    height: 41px;
    padding: 0 9px 0 2px;
    gap: 11px;
  }

  .side-head h1 {
    flex: 1;
    margin: 0;
    font: 23px/32px 'Open Sans', sans-serif;
    color: #c47a1c;
  }

  .side-body {
    flex: 1;
    padding: 16px 17px 0 12px;
  }

  .mode {
    display: flex;
    gap: 4px;
  }

  fieldset {
    flex: 1;
    margin: 0;
    padding: 0;
    border: 0;
  }

  legend {
    padding: 0;
    margin-bottom: 4px;
  }

  fieldset label {
    display: flex;
    align-items: center;
    height: 20px;
    gap: 4px;
    color: #aaa;
  }

  fieldset input {
    width: 15px;
    height: 15px;
    appearance: none;
    border: 1px solid #ccc;
    border-radius: 50%;
  }

  fieldset input:checked {
    background: radial-gradient(circle, #999 3px, #fff 4px);
  }

  .zoom-btn {
    justify-content: center;
    width: 60px;
    height: 60px;
    border: 1px solid #aaa;
  }

  .lens {
    width: 34px;
    height: 34px;
  }

  p {
    margin: 9px 0 21px;
  }

  .viewer {
    display: grid;
    grid-template-columns: 21px 298px 21px;
    margin-bottom: 10px;
  }

  .v-scroll {
    display: flex;
    flex-direction: column;
    justify-content: space-between;
    align-items: center;
    padding: 5px 0;
    background: #eee;
  }

  .v-scroll .solid {
    fill: #bbb;
  }

  .plan {
    width: 298px;
    height: 298px;
    border: 1px solid #ddd;
    border-top: 2px solid #777;
    border-left: 2px solid #777;
  }

  .h-scroll {
    display: flex;
    grid-column: 2;
    height: 21px;
    gap: 2px;
    background: #eee;
  }

  .h-scroll button,
  .sheet-scroll button {
    justify-content: center;
    width: 21px;
    height: 21px;
    border: 1px solid #aaa;
    background: #fff;
  }

  .h-scroll button:last-child {
    margin-left: auto;
  }

  .h-scroll span {
    width: 10px;
    border: 1px solid #aaa;
    background: #fff;
  }

  .field {
    display: flex;
    align-items: center;
    justify-content: space-between;
    height: 25px;
    margin-bottom: 10px;
  }

  .field input {
    width: 72px;
    height: 25px;
    padding: 0 2px 4px;
    border: 1px solid #666;
    font: 12px/16px 'Open Sans', sans-serif;
  }

  .field input:disabled {
    color: #777;
  }

  .side-tabs {
    display: flex;
    height: 27px;
    margin-bottom: 1px;
    font: 13px/16px 'Open Sans', sans-serif;
  }

  .side-tabs button {
    gap: 4px;
    padding: 0 6px;
    border-top: 1px solid #e5e5e5;
  }

  .side-tabs button:last-child {
    flex: 1;
  }

  .side-tabs .current {
    padding: 0 6px 3px 2px;
    border: solid #999;
    border-width: 0 1px 1px 0;
  }

  /* Drawing area */
  .workspace {
    display: flex;
    flex: 1;
    flex-direction: column;
    min-width: 0;
    border: 2px solid #777;
    border-right: 1px solid #ddd;
    border-bottom: 1px solid #ddd;
    margin: 0 1px 1px 0;
  }

  .drawing {
    flex: 1;
    width: 100%;
    min-height: 0;
  }

  .dims {
    font: 15px 'Liberation Sans', Arial, sans-serif;
    fill: #111;
    text-anchor: middle;
  }

  .dims rect {
    fill: #fff;
  }

  .sheet-bar {
    display: flex;
    height: 21px;
    border-top: 1px solid #777;
    color: #111;
  }

  .sheet-nav {
    display: flex;
    align-items: center;
    width: 90px;
    gap: 7px;
    padding-left: 2px;
  }

  .sheet-nav .sign {
    width: 11px;
    height: 11px;
  }

  .sheet {
    position: relative;
    width: 74px;
    height: 20px;
    justify-content: center;
    margin-right: -10px;
  }

  .sheet svg {
    position: absolute;
    inset: 0;
    width: 74px;
    height: 20px;
    fill: #f9dff9;
    stroke: #aaa;
  }

  .sheet span {
    position: relative;
  }

  .sheet.active {
    font-weight: 700;
  }

  .sheet-scroll {
    display: flex;
    margin: 0 23px 0 auto;
  }

  .sheet-scroll button {
    height: 20px;
  }

  .sheet-scroll span {
    width: 6px;
    height: 20px;
    border: 2px solid #aaa;
    border-right-width: 1px;
  }

  footer {
    display: flex;
    justify-content: flex-end;
    height: 35px;
    padding: 8px 47px 0 0;
    background: #f8981d;
  }
</style>
